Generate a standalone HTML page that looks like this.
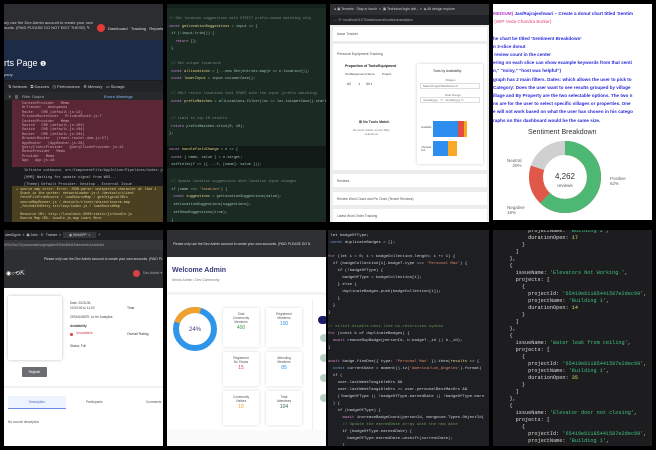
<!DOCTYPE html>
<html><head><meta charset="utf-8">
<style>
*{margin:0;padding:0;box-sizing:border-box}
html,body{width:656px;height:450px;overflow:hidden}
body{background:#000;position:relative;font-family:"Liberation Sans",sans-serif}
.t{position:absolute;overflow:hidden}
.a{position:absolute;white-space:nowrap}
.m{font-family:"Liberation Mono",monospace}
</style></head><body>

<!-- Tile 1 -->
<div class="t" style="left:4px;top:4px;width:159px;height:218px;background:#1c1c1e">
 <div class="a" style="left:0;top:0;width:159px;height:36px;background:#2c2d30"></div>
 <div class="a" style="left:0;top:16px;font-size:4px;color:#ccc">uly use the Dev Admin account to create your own<br>ounts. (PAID PLEASE DO NOT EDIT THESE) ✎</div>
 <div class="a" style="left:93px;top:20px;width:8px;height:8px;border-radius:50%;background:#e53935"></div>
 <div class="a" style="left:104px;top:22px;font-size:4px;color:#ddd">Dashboard &nbsp; Tracking &nbsp; Reports</div>
 <div class="a" style="left:0;top:36px;width:159px;height:40px;background:#1e2b47"></div>
 <div class="a" style="left:0;top:54px;font-size:9px;color:#fff">rts Page <span style="font-size:7px">❶</span></div>
 <div class="a" style="left:0;top:68px;font-size:4px;color:#ccc">pany</div>
 <div class="a" style="left:0;top:77px;width:159px;height:11px;background:#232427;font-size:4px;color:#ccc;padding:3px 4px">⇅ Network &nbsp; ⧉ Sources &nbsp; ◷ Performance &nbsp; ⚙ Memory &nbsp; ▭ Storage</div>
 <div class="a" style="left:0;top:88px;width:159px;height:8px;background:#28292c;font-size:4px;color:#aaa;padding:2px 4px">✕ &nbsp; ▥ &nbsp; Filter Output<span style="margin-left:60px;color:#8ab4f8">Errors Warnings</span></div>
 <div class="a m" style="left:8px;top:96px;width:151px;height:67px;background:#5b2734;font-size:3.6px;line-height:4.4px;color:#c8a8b8;padding:2px 10px">ContextProvider &nbsp; Memo<br>HrTracker &nbsp; Anonymous<br>Route &nbsp;&nbsp; CMD (default.js:13)<br>PrivateRouteInner &nbsp; PrivateRoute.js:7<br>ContextProvider &nbsp; Memo<br>Switch &nbsp; CMD (default.js:104)<br>Switch &nbsp; CMD (default.js:104)<br>Router &nbsp; CMD (default.js:104)<br>BrowserRouter &nbsp; (react-router-dom.js:57)<br>AppRouter &nbsp; (AppRouter.js:28)<br>QueryClientProvider &nbsp; QueryClientProvider.js:13<br>ReduxProvider &nbsp; Memo<br>Provider &nbsp; Memo<br>App &nbsp; App.js:18</div>
 <div class="a m" style="left:20px;top:164px;font-size:3.6px;line-height:7px;color:#bbb">Infinite outbound. src/ComponentFile/AppInline/Pipelines/index.js<br>[HMR] Waiting for update signal from WDS...<br>[Theme] Default Provider: Desktop - External Issue</div>
 <div class="a m" style="left:8px;top:182px;width:151px;height:36px;background:#4a4122;font-size:3.4px;line-height:4.2px;color:#e0cf90;padding:2px 4px">⚠ source map error: Error: JSON.parse: unexpected character at line 1<br>&nbsp; Stack in the worker: networkLoader.js:1 /devtools/client<br>&nbsp; fetchFileFromSource / loadSourceMap / getOriginalURLs<br>&nbsp; sourceMapRunner.js / devtools/client/shared/source-map<br>&nbsp; _fetchWithRetry src/lazy/index.js / loadSourceMap<br><br>&nbsp; Resource URL: http://localhost:3000/static/js/bundle.js<br>&nbsp; Source Map URL: bundle.js.map  Learn More</div>
</div>

<!-- Tile 2 -->
<div class="t m" style="left:167px;top:4px;width:159px;height:218px;background:#1b2a23;font-size:3.6px;color:#9fc4a8">
 <div class="a" style="left:0;top:0;width:159px;height:4px;background:#14201b"></div>
 <div class="a" style="left:2px;top:12px;line-height:7.5px"><span style="color:#6f8f78">// Get location suggestions with STRICT prefix-based matching only</span><br><span style="color:#d08bd8">const</span> <span style="color:#e6d68a">getLocationSuggestions</span> = input =&gt; {<br>&nbsp;if (!input.trim()) {<br>&nbsp;&nbsp;&nbsp;<span style="color:#d08bd8">return</span> [];<br>&nbsp;}<br><br><span style="color:#6f8f78">&nbsp;// Get unique locations</span><br>&nbsp;<span style="color:#d08bd8">const</span> <span style="color:#e6d68a">allLocations</span> = [...new Set(entries.map(e =&gt; e.location))];<br>&nbsp;<span style="color:#d08bd8">const</span> <span style="color:#e6d68a">lowerInput</span> = input.toLowerCase();<br><br><span style="color:#6f8f78">&nbsp;// ONLY return locations that START with the input (prefix matching)</span><br>&nbsp;<span style="color:#d08bd8">const</span> <span style="color:#e6d68a">prefixMatches</span> = allLocations.filter(loc =&gt; loc.toLowerCase().startsWith</div>
 <div class="a" style="left:2px;top:112px;line-height:7.5px"><span style="color:#6f8f78">&nbsp;// Limit to top 10 results</span><br>&nbsp;<span style="color:#d08bd8">return</span> prefixMatches.slice(0, 10);<br>};</div>
 <div class="a" style="left:0;top:142px;width:159px;height:22px;background:#121a17"></div>
 <div class="a" style="left:2px;top:143px;line-height:7.5px"><span style="color:#d08bd8">const</span> <span style="color:#e6d68a">handleFieldChange</span> = e =&gt; {<br>&nbsp;<span style="color:#d08bd8">const</span> { name, value } = e.target;<br>&nbsp;setFields(f =&gt; ({ ...f, [name]: value }));</div>
 <div class="a" style="left:2px;top:175px;line-height:7.7px"><span style="color:#6f8f78">&nbsp;// Update location suggestions when location input changes</span><br>&nbsp;if (name === <span style="color:#e0a870">'location'</span>) {<br>&nbsp;&nbsp;<span style="color:#d08bd8">const</span> <span style="color:#e6d68a">suggestions</span> = getLocationSuggestions(value);<br>&nbsp;&nbsp;setLocationSuggestions(suggestions);<br>&nbsp;&nbsp;setShowSuggestions(true);<br>&nbsp;}</div>
</div>

<!-- Tile 3 -->
<div class="t" style="left:330px;top:4px;width:159px;height:218px;background:#ececec">
 <div class="a" style="left:0;top:0;width:159px;height:11px;background:#2e2f33;font-size:3.5px;color:#ccc;padding:3px 4px">● ▣ Tenants · Stay in touch &nbsp;× &nbsp;▣ Technical login attr... × &nbsp;◈ All design explore</div>
 <div class="a" style="left:0;top:11px;width:159px;height:10px;background:#202124;font-size:3.5px;color:#aaa;padding:3px 4px">← ⟳ &nbsp;localhost:5173/dashboard/locations/analytics</div>
 <div class="a" style="left:3px;top:23px;width:154px;height:14px;background:#fff;font-size:3.5px;color:#555;padding:5px 4px">Issue Tracker</div>
 <div class="a" style="left:3px;top:40px;width:154px;height:126px;background:#fff">
  <div class="a" style="left:4px;top:8px;font-size:3.5px;color:#555">Personal Equipment Tracking</div>
  <div class="a" style="left:12px;top:20px;font-size:3.5px;color:#222;font-weight:bold">Proportion of Tools/Equipment</div>
  <div class="a" style="left:12px;top:28px;font-size:3px;color:#444">Tool/Equipment Name &nbsp; &nbsp; &nbsp; &nbsp; Project</div>
  <div class="a" style="left:14px;top:38px;font-size:3.2px;color:#444">All &nbsp; &nbsp; &nbsp; &nbsp; ▾ &nbsp; &nbsp; &nbsp; All ▾</div>
  <div class="a" style="left:26px;top:76px;font-size:3.6px;color:#333;font-weight:bold">⊞ No Tools Match</div>
  <div class="a" style="left:20px;top:84px;font-size:3px;color:#777;text-align:center">No tools match current filter<br>selections</div>
  <div class="a" style="left:84px;top:20px;width:66px;height:100px;background:#fff;box-shadow:0 0 3px rgba(0,0,0,.2)"></div>
  <div class="a" style="left:100px;top:25px;font-size:3.3px;color:#333">Tools by Availability</div>
  <div class="a" style="left:112px;top:34px;font-size:3px;color:#777">Villages</div>
  <div class="a" style="left:87px;top:39px;width:60px;height:6px;border:1px solid #ddd;font-size:2.8px;color:#666;padding-left:2px">Select Project/Site/Person ▾</div>
  <div class="a" style="left:112px;top:49px;font-size:3px;color:#777">Date Range</div>
  <div class="a" style="left:87px;top:53px;width:60px;height:6px;border:1px solid #ddd;font-size:2.8px;color:#666;padding-left:2px">mm/dd/yyyy &nbsp; ▭ &nbsp; mm/dd/yyyy ▭</div>
  <div class="a" style="left:88px;top:82px;font-size:2.6px;color:#555">Available</div>
  <div class="a" style="left:100px;top:77px;width:25px;height:16px;background:#2e8ef0"></div>
  <div class="a" style="left:125px;top:77px;width:6px;height:16px;background:#e34d3d"></div>
  <div class="a" style="left:131px;top:77px;width:3px;height:16px;background:#f9a825"></div>
  <div class="a" style="left:88px;top:102px;font-size:2.6px;color:#555">Checked<br>Out</div>
  <div class="a" style="left:100px;top:97px;width:15px;height:15px;background:#2e8ef0"></div>
  <div class="a" style="left:115px;top:97px;width:9px;height:15px;background:#f9a825"></div>
 </div>
 <div class="a" style="left:3px;top:170px;width:154px;height:13px;background:#fff;font-size:3.3px;color:#555;padding:5px 4px">Reviews</div>
 <div class="a" style="left:3px;top:188px;width:154px;height:13px;background:#fff;font-size:3.3px;color:#555;padding:5px 4px">Review Word Cloud and Pie Chart (Tenant Reviews)</div>
 <div class="a" style="left:3px;top:205px;width:154px;height:13px;background:#fff;font-size:3.3px;color:#555;padding:5px 4px">Latest Work Order Tracking</div>
</div>

<!-- Tile 4 -->
<div class="t" style="left:493px;top:4px;width:159px;height:216px;background:#fff">
 <div class="a" style="left:0;top:6px;font-size:4.6px;line-height:8.2px;font-weight:bold;color:#2a2ad8"><span style="color:#b03ad0">MEDIUM)</span> Jas/Rajrajeshwari – Create a donut chart titled 'Sentim<br>&nbsp;<span style="color:#e0407a;font-weight:normal">(WIP Veda Chandra Borkar)</span><br><br>he chart be titled 'Sentiment Breakdown'<br>n 3-slice donut<br>&nbsp;review count in the center<br>ering on each slice can show example keywords from that senti<br>n," "noisy," "host was helpful")<br>graph has 2 main filters. Dates: which allows the user to pick to<br>Category: Does the user want to see results grouped by village<br>illage and By Property are the two selectable options. The two n<br>ns are for the user to select specific villages or properties. One<br>e will not work based on what the user has chosen in his catego<br>raphs on this dashboard would be the same size.</div>
 <div class="a" style="left:35px;top:125px;font-size:7px;color:#333">Sentiment Breakdown</div>
 <svg class="a" style="left:33px;top:137px" width="80" height="80" viewBox="0 0 80 80">
  <circle cx="39" cy="36" r="29" fill="none" stroke="#d0d0d0" stroke-width="14"/>
  <circle cx="39" cy="36" r="29" fill="none" stroke="#e0584a" stroke-width="14" stroke-dasharray="145.8 182.2" transform="rotate(-90 39 36)"/>
  <circle cx="39" cy="36" r="29" fill="none" stroke="#4cb874" stroke-width="14" stroke-dasharray="113 182.2" transform="rotate(-90 39 36)"/>
  <text x="39" y="38" font-size="8" text-anchor="middle" fill="#333" font-family="Liberation Sans">4,262</text>
  <text x="39" y="46" font-size="4.5" text-anchor="middle" fill="#555" font-family="Liberation Sans">reviews</text>
 </svg>
 <div class="a" style="left:14px;top:154px;font-size:4.5px;color:#666;text-align:right">Neutral<br>20%</div>
 <div class="a" style="left:117px;top:172px;font-size:4.5px;color:#666">Positive<br>62%</div>
 <div class="a" style="left:14px;top:201px;font-size:4.5px;color:#666">Negative<br>18%</div>
</div>

<!-- Tile 5 -->
<div class="t" style="left:4px;top:230px;width:159px;height:216px;background:#fff">
 <div class="a" style="left:0;top:0;width:159px;height:10px;background:#1f2023;font-size:3.4px;color:#ccc;padding:3px 0">&nbsp;ulesSignin &nbsp;× &nbsp;▣ Jobs · S · Trainee &nbsp;× &nbsp;<span style="background:#35363a;padding:1px 6px">◉ WebAPP &nbsp;×</span> &nbsp;+</div>
 <div class="a" style="left:0;top:10px;width:159px;height:10px;background:#35363a;font-size:3.2px;color:#aaa;padding:3px 0">/67fe20cc72/yourdomain/org/register/67fa0d09d1/list/events/1a4c4/dat</div>
 <div class="a" style="left:0;top:20px;width:159px;height:38px;background:#2d2f31"></div>
 <div class="a" style="left:40px;top:27px;font-size:3.4px;color:#ddd">Please only use the Dev Admin account to create your own accounts. (PAID PLEA</div>
 <div class="a" style="left:2px;top:40px;font-size:6px;color:#fff">◉○⟲⇱</div>
 <div class="a" style="left:129px;top:40px;width:7px;height:7px;border-radius:50%;background:#d8404a"></div>
 <div class="a" style="left:139px;top:41px;font-size:3.4px;color:#aaa">Dev Admin ▾</div>
 <div class="a" style="left:4px;top:66px;width:54px;height:64px;background:#fff;box-shadow:0 0 3px rgba(0,0,0,.25);border-radius:2px"></div>
 <div class="a" style="left:66px;top:71px;font-size:3.2px;line-height:4.5px;color:#444">Date: 2025-05-<br>10:00:00 to 11:00<br><br>ORGANIZER: Jo Hn Analytics<br><br><b>Availability</b></div>
 <div class="a" style="left:66px;top:103px;width:3px;height:3px;border-radius:50%;background:#d8404a"></div>
 <div class="a" style="left:72px;top:101px;font-size:3.2px;color:#d8404a">Unavailable</div>
 <div class="a" style="left:66px;top:114px;font-size:3.2px;color:#444">Status: Full</div>
 <div class="a" style="left:123px;top:76px;font-size:3.4px;color:#333">Time</div>
 <div class="a" style="left:123px;top:102px;font-size:3.4px;color:#333">Overall Rating</div>
 <div class="a" style="left:18px;top:137px;width:25px;height:10px;background:#6b6d70;border-radius:1px;font-size:3.2px;color:#fff;text-align:center;line-height:10px">Register</div>
 <div class="a" style="left:0;top:156px;width:159px;height:2px;background:#f0f0f0"></div>
 <div class="a" style="left:4px;top:166px;width:58px;height:13px;background:#eef4ff;border-bottom:1px solid #6a8ee8;font-size:3.2px;color:#4466bb;text-align:center;line-height:12px">Description</div>
 <div class="a" style="left:82px;top:166px;font-size:3.2px;color:#555;line-height:12px">Participants</div>
 <div class="a" style="left:142px;top:166px;font-size:3.2px;color:#555;line-height:12px">Comments</div>
 <div class="a" style="left:4px;top:190px;font-size:3.2px;color:#555">No council description</div>
</div>

<!-- Tile 6 -->
<div class="t" style="left:167px;top:230px;width:159px;height:216px;background:#fff">
 <div class="a" style="left:0;top:0;width:159px;height:27px;background:#2f3033"></div>
 <div class="a" style="left:6px;top:12px;font-size:3.4px;color:#ddd">Please only use the Dev Admin account to create your own accounts. (PAID PLEASE DO N</div>
 <div class="a" style="left:5px;top:37px;font-size:7px;font-weight:bold;color:#3b3a7a">Welcome Admin</div>
 <div class="a" style="left:5px;top:48px;font-size:3.4px;color:#777">Senior Admin • Dev Community</div>
 <div class="a" style="left:0;top:62px;width:159px;height:3px;background:#f3f3f3"></div>
 <svg class="a" style="left:4px;top:75px" width="48" height="48" viewBox="0 0 48 48">
  <circle cx="24" cy="24" r="19" fill="none" stroke="#2f95e8" stroke-width="6"/>
  <circle cx="24" cy="24" r="19" fill="none" stroke="#f2a22c" stroke-width="6" stroke-dasharray="28.6 119.4" transform="rotate(-160 24 24)"/>
  <text x="24" y="26" font-size="6" text-anchor="middle" fill="#3b3a7a" font-family="Liberation Sans">24%</text>
 </svg>
 <div class="a" style="left:56px;top:78px;width:36px;height:39px;box-shadow:0 0 3px rgba(0,0,0,.15);font-size:3.2px;color:#555;text-align:center;padding-top:4px">Total<br>Community<br>Members<br><span style="font-size:5px;color:#3a9a4a;line-height:9px">400</span></div>
 <div class="a" style="left:99px;top:78px;width:36px;height:39px;box-shadow:0 0 3px rgba(0,0,0,.15);font-size:3.2px;color:#555;text-align:center;padding-top:4px">Registered<br>Members<br><span style="font-size:5px;color:#2f95e8;line-height:9px">100</span></div>
 <div class="a" style="left:56px;top:122px;width:36px;height:34px;box-shadow:0 0 3px rgba(0,0,0,.15);font-size:3.2px;color:#555;text-align:center;padding-top:4px">Registered<br>No Shows<br><span style="font-size:5px;color:#d8404a;line-height:9px">15</span></div>
 <div class="a" style="left:99px;top:122px;width:36px;height:34px;box-shadow:0 0 3px rgba(0,0,0,.15);font-size:3.2px;color:#555;text-align:center;padding-top:4px">Attending<br>Members<br><span style="font-size:5px;color:#2f95e8;line-height:9px">85</span></div>
 <div class="a" style="left:56px;top:161px;width:36px;height:34px;box-shadow:0 0 3px rgba(0,0,0,.15);font-size:3.2px;color:#555;text-align:center;padding-top:4px">Community<br>Visitors<br><span style="font-size:5px;color:#f2a22c;line-height:9px">19</span></div>
 <div class="a" style="left:99px;top:161px;width:36px;height:34px;box-shadow:0 0 3px rgba(0,0,0,.15);font-size:3.2px;color:#555;text-align:center;padding-top:4px">Total<br>Attendees<br><span style="font-size:5px;color:#3a6a4a;line-height:9px">104</span></div>
 <div class="a" style="left:145px;top:70px;width:14px;height:130px;border-left:1px solid #eee"></div>
 <div class="a" style="left:151px;top:86px;width:10px;height:8px;border-radius:4px;background:#1c1c6a"></div>
 <div class="a" style="left:153px;top:104px;width:8px;height:8px;border-radius:50%;background:#b8cfc4"></div>
 <div class="a" style="left:153px;top:124px;width:8px;height:8px;border-radius:50%;background:#b8cfc4"></div>
 <div class="a" style="left:153px;top:144px;width:8px;height:8px;border-radius:50%;background:#b8cfc4"></div>
 <div class="a" style="left:153px;top:164px;width:8px;height:8px;border-radius:50%;background:#b8cfc4"></div>
 <div class="a" style="left:0;top:200px;width:159px;height:16px;background:#fafafa"></div>
</div>

<!-- Tile 7 -->
<div class="t m" style="left:328px;top:230px;width:161px;height:216px;background:#1e1f22;font-size:4px;line-height:7px;color:#cfd5dd">
 <div class="a" style="left:0;top:-4px"><span style="color:#7aa6da">&nbsp;&nbsp;const</span> badgeCollection = <span style="color:#e6d68a">await</span> Badge.find({ personId, user, badgeType<br>&nbsp;let badgeOfType;<br><span style="color:#7aa6da">&nbsp;const</span> duplicateBadges = [];<br><br><span style="color:#c586c0">for</span> (let i = 0; i &lt; badgeCollection.length; i += 1) {<br>&nbsp;&nbsp;if (badgeCollection[i].badge?.type === <span style="color:#e08a6a">'Personal Max'</span>) {<br>&nbsp;&nbsp;&nbsp;&nbsp;if (!badgeOfType) {<br>&nbsp;&nbsp;&nbsp;&nbsp;&nbsp;&nbsp;badgeOfType = badgeCollection[i];<br>&nbsp;&nbsp;&nbsp;&nbsp;} else {<br>&nbsp;&nbsp;&nbsp;&nbsp;&nbsp;&nbsp;duplicateBadges.push(badgeCollection[i]);<br>&nbsp;&nbsp;&nbsp;&nbsp;}<br>&nbsp;&nbsp;}<br>}<br><br><span style="color:#6a9955">// eslint-disable-next-line no-restricted-syntax</span><br><span style="color:#c586c0">for</span> (const b of duplicateBadges) {<br>&nbsp;&nbsp;<span style="color:#c586c0">await</span> removeDupBadge(personId, b.badge?._id || b._id);<br>}<br><br><span style="color:#c586c0">await</span> badge.findOne({ type: <span style="color:#e08a6a">'Personal Max'</span> }).then(<span style="color:#e6d68a">results</span> =&gt; {<br>&nbsp;&nbsp;<span style="color:#7aa6da">const</span> currentDate = moment().tz(<span style="color:#e08a6a">'America/Los_Angeles'</span>).format(<br>&nbsp;&nbsp;if (<br>&nbsp;&nbsp;&nbsp;&nbsp;user.lastWeekTangibleHrs &amp;&amp;<br>&nbsp;&nbsp;&nbsp;&nbsp;user.lastWeekTangibleHrs &gt;= user.personalBestMaxHrs &amp;&amp;<br>&nbsp;&nbsp;&nbsp;&nbsp;(!badgeOfType || !badgeOfType.earnedDate || !badgeOfType.earn<br>&nbsp;&nbsp;) {<br>&nbsp;&nbsp;&nbsp;&nbsp;if (badgeOfType) {<br>&nbsp;&nbsp;&nbsp;&nbsp;&nbsp;&nbsp;<span style="color:#c586c0">await</span> increaseBadgeCount(personId, mongoose.Types.ObjectId(<br><span style="color:#6a9955">&nbsp;&nbsp;&nbsp;&nbsp;&nbsp;&nbsp;// Update the earnedDate array with the new date</span><br>&nbsp;&nbsp;&nbsp;&nbsp;&nbsp;&nbsp;if (badgeOfType.earnedDate) {<br>&nbsp;&nbsp;&nbsp;&nbsp;&nbsp;&nbsp;&nbsp;&nbsp;badgeOfType.earnedDate.unshift(currentDate);<br>&nbsp;&nbsp;&nbsp;&nbsp;&nbsp;&nbsp;}<br>&nbsp;&nbsp;&nbsp;&nbsp;} else if (results) {<br>&nbsp;&nbsp;&nbsp;&nbsp;&nbsp;&nbsp;<span style="color:#c586c0">await</span> addBadge(personId, mongoose.Types.ObjectId(results._<br>&nbsp;&nbsp;&nbsp;&nbsp;}<br>&nbsp;&nbsp;}</div>
</div>

<!-- Tile 8 -->
<div class="t m" style="left:493px;top:230px;width:159px;height:216px;background:#1d1d1f;font-size:5.2px;line-height:7px;color:#d8d8d8">
 <div class="a" style="left:4px;top:-2px">&nbsp;&nbsp;&nbsp;&nbsp;&nbsp;&nbsp;&nbsp;&nbsp;&nbsp;&nbsp;projectName: <span style="color:#3fbf7f">'Building 2'</span>,<br>&nbsp;&nbsp;&nbsp;&nbsp;&nbsp;&nbsp;&nbsp;&nbsp;&nbsp;&nbsp;durationOpen: <span style="color:#e6d66a">17</span><br>&nbsp;&nbsp;&nbsp;&nbsp;&nbsp;&nbsp;&nbsp;&nbsp;}<br>&nbsp;&nbsp;&nbsp;&nbsp;&nbsp;&nbsp;]<br>&nbsp;&nbsp;&nbsp;&nbsp;},<br>&nbsp;&nbsp;&nbsp;&nbsp;{<br>&nbsp;&nbsp;&nbsp;&nbsp;&nbsp;&nbsp;issueName: <span style="color:#3fbf7f">'Elevators Not Working.'</span>,<br>&nbsp;&nbsp;&nbsp;&nbsp;&nbsp;&nbsp;projects: [<br>&nbsp;&nbsp;&nbsp;&nbsp;&nbsp;&nbsp;&nbsp;&nbsp;{<br>&nbsp;&nbsp;&nbsp;&nbsp;&nbsp;&nbsp;&nbsp;&nbsp;&nbsp;&nbsp;projectId: <span style="color:#3fbf7f">'65419e61185441587e2dec99'</span>,<br>&nbsp;&nbsp;&nbsp;&nbsp;&nbsp;&nbsp;&nbsp;&nbsp;&nbsp;&nbsp;projectName: <span style="color:#3fbf7f">'Building 1'</span>,<br>&nbsp;&nbsp;&nbsp;&nbsp;&nbsp;&nbsp;&nbsp;&nbsp;&nbsp;&nbsp;durationOpen: <span style="color:#e6d66a">14</span><br>&nbsp;&nbsp;&nbsp;&nbsp;&nbsp;&nbsp;&nbsp;&nbsp;}<br>&nbsp;&nbsp;&nbsp;&nbsp;&nbsp;&nbsp;]<br>&nbsp;&nbsp;&nbsp;&nbsp;},<br>&nbsp;&nbsp;&nbsp;&nbsp;{<br>&nbsp;&nbsp;&nbsp;&nbsp;&nbsp;&nbsp;issueName: <span style="color:#3fbf7f">'Water leak from ceiling'</span>,<br>&nbsp;&nbsp;&nbsp;&nbsp;&nbsp;&nbsp;projects: [<br>&nbsp;&nbsp;&nbsp;&nbsp;&nbsp;&nbsp;&nbsp;&nbsp;{<br>&nbsp;&nbsp;&nbsp;&nbsp;&nbsp;&nbsp;&nbsp;&nbsp;&nbsp;&nbsp;projectId: <span style="color:#3fbf7f">'65419e61185441587e2dec99'</span>,<br>&nbsp;&nbsp;&nbsp;&nbsp;&nbsp;&nbsp;&nbsp;&nbsp;&nbsp;&nbsp;projectName: <span style="color:#3fbf7f">'Building 1'</span>,<br>&nbsp;&nbsp;&nbsp;&nbsp;&nbsp;&nbsp;&nbsp;&nbsp;&nbsp;&nbsp;durationOpen: <span style="color:#e6d66a">35</span><br>&nbsp;&nbsp;&nbsp;&nbsp;&nbsp;&nbsp;&nbsp;&nbsp;}<br>&nbsp;&nbsp;&nbsp;&nbsp;&nbsp;&nbsp;]<br>&nbsp;&nbsp;&nbsp;&nbsp;},<br>&nbsp;&nbsp;&nbsp;&nbsp;{<br>&nbsp;&nbsp;&nbsp;&nbsp;&nbsp;&nbsp;issueName: <span style="color:#3fbf7f">'Elevator door not closing'</span>,<br>&nbsp;&nbsp;&nbsp;&nbsp;&nbsp;&nbsp;projects: [<br>&nbsp;&nbsp;&nbsp;&nbsp;&nbsp;&nbsp;&nbsp;&nbsp;{<br>&nbsp;&nbsp;&nbsp;&nbsp;&nbsp;&nbsp;&nbsp;&nbsp;&nbsp;&nbsp;projectId: <span style="color:#3fbf7f">'65419e61185441587e2dec99'</span>,<br>&nbsp;&nbsp;&nbsp;&nbsp;&nbsp;&nbsp;&nbsp;&nbsp;&nbsp;&nbsp;projectName: <span style="color:#3fbf7f">'Building 1'</span>,</div>
</div>

</body></html>
